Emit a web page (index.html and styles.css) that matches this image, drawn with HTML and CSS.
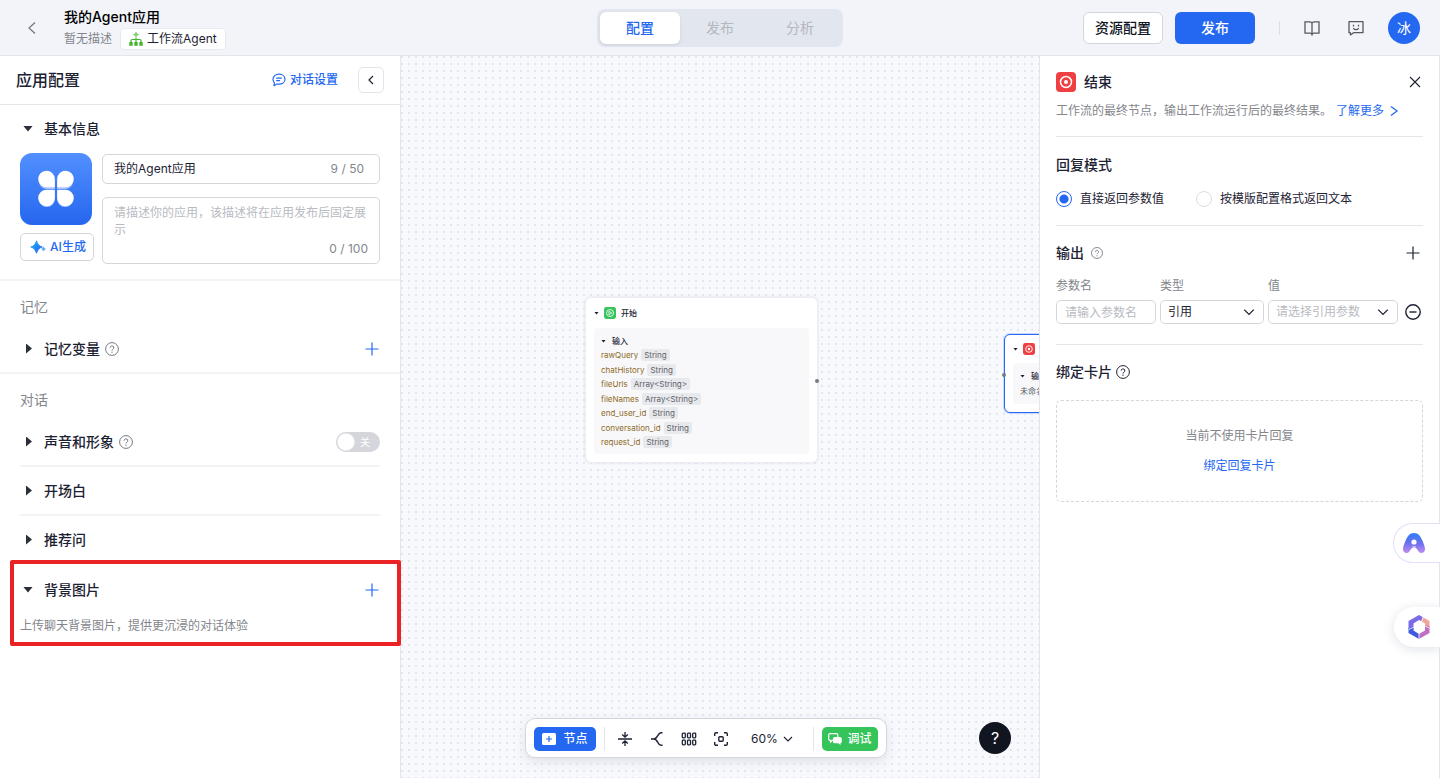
FILE: index.html
```html
<!DOCTYPE html>
<html lang="zh-CN">
<head>
<meta charset="utf-8">
<meta name="viewport" content="width=device-width, initial-scale=1">
<title>我的Agent应用</title>
<link rel="stylesheet" href="styles.css">
</head>
<body>
<svg class="defs" aria-hidden="true">
  <symbol id="help" viewBox="0 0 14 14"><circle cx="7" cy="7" r="6.4" fill="none" stroke="currentColor"/><path d="M5.2 5.7a1.8 1.8 0 1 1 2.7 1.5c-.6.4-.9.6-.9 1.3" fill="none" stroke="currentColor"/><circle cx="7" cy="10.2" r=".65" fill="currentColor"/></symbol>
  <symbol id="plus" viewBox="0 0 14 14"><path d="M7 .5v13M.5 7h13" fill="none" stroke="currentColor" stroke-width="1.2"/></symbol>
  <symbol id="down" viewBox="0 0 10 10"><path d="M1 3l4 4 4-4" fill="none" stroke="currentColor" stroke-width="1.1"/></symbol>
  <symbol id="end" viewBox="0 0 20 20"><rect width="20" height="20" rx="4" fill="#ee4043"/><circle cx="10" cy="10" r="5.5" fill="none" stroke="#fff" stroke-width="1.5"/><circle cx="10" cy="10" r="2" fill="#fff"/></symbol>
</svg>
<div class="app">
  <header class="topbar">
    <div class="topbar-left">
      <button class="icon-btn back" aria-label="返回"><svg width="10" height="14" viewBox="0 0 10 14"><path d="M8 1.500L2 7l6 5.500" fill="none" stroke="currentColor" stroke-width="1.3"/></svg></button>
      <div class="app-title">
        <h1>我的Agent应用</h1>
        <div class="app-meta">
          <span>暂无描述</span>
          <span class="badge"><svg width="14" height="14" viewBox="0 0 14 14"><path d="M7 0l.8 1.800L9.600 2.600l-1.800.800L7 5.200l-.8-1.800-1.800-.8 1.800-.8z" fill="#7ccf68" stroke="#7ccf68" stroke-width=".6"/><path d="M7 5.500v5M2 10.500V8.800q0-1.300 1.300-1.300h7.400q1.300 0 1.300 1.300v1.700" fill="none" stroke="#45b52e" stroke-width="1.200"/><path d="M.3 10h3.400v3.700H.3zM5.300 10h3.400v3.700H5.300zM10.300 10h3.400v3.700h-3.400z" fill="#45b52e"/></svg>工作流Agent</span>
        </div>
      </div>
    </div>
    <nav class="tabs">
      <button class="tab tab-active">配置</button>
      <button class="tab">发布</button>
      <button class="tab">分析</button>
    </nav>
    <div class="topbar-right">
      <button class="btn btn-outline">资源配置</button>
      <button class="btn btn-primary">发布</button>
      <span class="top-sep"></span>
      <button class="icon-btn" aria-label="文档"><svg width="16" height="16" viewBox="0 0 16 16"><path d="M8 3.200Q7.600 1.800 6 1.800H1v11.400h5q1.600 0 2 1.400.4-1.400 2-1.400h5V1.800h-5Q8.400 1.800 8 3.200zM8 3.200v11.400" fill="none" stroke="currentColor" stroke-width="1.300"/></svg></button>
      <button class="icon-btn" aria-label="反馈"><svg width="16" height="16" viewBox="0 0 16 16"><path d="M1 1.700h14v11H5.500L2.500 14.900l-.2-2.200H1z" fill="none" stroke="currentColor" stroke-width="1.300" stroke-linejoin="round"/><path d="M5.500 4.800v1.700M10.500 4.800v1.700M5.200 8.200q2.800 2.800 5.600 0" fill="none" stroke="currentColor" stroke-width="1.300"/></svg></button>
      <button class="avatar">冰</button>
    </div>
  </header>

  <main class="workspace">
    <aside class="config">
      <div class="config-head">
        <h2>应用配置</h2>
        <button class="link-btn"><svg width="14" height="14" viewBox="0 0 14 14"><path d="M7 1.200c3.500 0 6 2.200 6 5s-2.500 5-6 5c-.7 0-1.400 0-2-.2L2 12.700l.4-2.900C1.500 8.900 1 7.600 1 6.200c0-2.800 2.500-5 6-5z" fill="none" stroke="currentColor" stroke-width="1.200" stroke-linejoin="round"/><path d="M4.200 5.200h5.600M4.200 7.600h3.800" fill="none" stroke="currentColor" stroke-width="1.200"/></svg>对话设置</button>
        <button class="collapse" aria-label="收起"><svg width="8" height="10" viewBox="0 0 8 10"><path d="M6 1L2 5l4 4" fill="none" stroke="currentColor" stroke-width="1.200"/></svg></button>
      </div>

      <section class="block">
        <div class="row"><span class="caret caret-down"></span><h3>基本信息</h3></div>
        <div class="basic">
          <div class="basic-left">
            <svg class="app-icon" viewBox="0 0 72 72"><defs><linearGradient id="g1" x1="0" y1="0" x2="0" y2="1"><stop offset="0" stop-color="#5290ff"/><stop offset="1" stop-color="#2566ee"/></linearGradient></defs><rect width="72" height="72" rx="12" fill="url(#g1)"/><path fill="#a9c6ff" d="M34.800 36h-8a8 8 0 1 1 8-8.500zM37.200 36v-8.500a8 8 0 1 1 8 8.500zM34.800 38v8a8 8 0 1 1-8-8zM37.200 38h8a8 8 0 1 1-8 8z"/><path fill="#fff" d="M34.800 34.300h-8a8.300 8.300 0 1 1 8-8.500zM37.200 34.300v-8.500a8.300 8.300 0 1 1 8 8.500zM34.800 36.700v8a8.300 8.300 0 1 1-8-8zM37.200 36.700h8a8.300 8.300 0 1 1-8 8z"/></svg>
            <button class="ai-btn"><svg width="16" height="16" viewBox="0 0 16 16"><defs><linearGradient id="g2" x1="0" y1="0" x2="1" y2="1"><stop offset="0" stop-color="#1fb6f4"/><stop offset="1" stop-color="#1f5cf0"/></linearGradient></defs><path d="M6.500 2Q7.500 6.800 12 8 7.500 9.200 6.500 14 5.500 9.200 1 8 5.500 6.800 6.500 2z" fill="url(#g2)" stroke="url(#g2)" stroke-width="1.200" stroke-linejoin="round"/><path d="M13.500 7.800q.4 1.800 2.200 2.200-1.800.4-2.200 2.200-.4-1.800-2.200-2.200 1.800-.4 2.200-2.200z" fill="#59a2f8" stroke="#59a2f8" stroke-width=".4"/></svg>AI生成</button>
          </div>
          <div class="basic-right">
            <div class="field"><input type="text" aria-label="应用名称" value="我的Agent应用"><span>9 / 50</span></div>
            <div class="field field-area"><textarea aria-label="应用描述" rows="2" placeholder="请描述你的应用，该描述将在应用发布后固定展示"></textarea><span>0 / 100</span></div>
          </div>
        </div>
      </section>

      <section class="block">
        <h4>记忆</h4>
        <div class="row"><span class="caret"></span><h3>记忆变量</h3><svg class="help"><use href="#help"/></svg><button class="icon-btn add" aria-label="添加记忆变量"><svg width="14" height="14"><use href="#plus"/></svg></button></div>
      </section>

      <section class="block block-last">
        <h4>对话</h4>
        <div class="row row-line"><span class="caret"></span><h3>声音和形象</h3><svg class="help"><use href="#help"/></svg><label class="switch"><input type="checkbox" aria-label="声音和形象"><span>关</span></label></div>
        <div class="row row-line"><span class="caret"></span><h3>开场白</h3></div>
        <div class="row"><span class="caret"></span><h3>推荐问</h3></div>
      </section>

      <section class="bg-image">
        <div class="row"><span class="caret caret-down"></span><h3>背景图片</h3><button class="icon-btn add" aria-label="添加背景图片"><svg width="14" height="14"><use href="#plus"/></svg></button></div>
        <p>上传聊天背景图片，提供更沉浸的对话体验</p>
      </section>
    </aside>

    <section class="canvas">
      <article class="node node-start">
        <div class="node-head"><span class="mini-caret"></span><svg width="12" height="12" viewBox="0 0 20 20"><rect width="20" height="20" rx="4" fill="#35c459"/><circle cx="10" cy="10" r="5.800" fill="none" stroke="#fff" stroke-width="1.400"/><path d="M8.300 7l4.500 3-4.500 3z" fill="none" stroke="#fff" stroke-width="1.300"/></svg>开始</div>
        <div class="node-body">
          <div class="node-sub"><span class="mini-caret"></span>输入</div>
          <ul class="vars">
            <li>rawQuery<code>String</code></li>
            <li>chatHistory<code>String</code></li>
            <li>fileUrls<code>Array&lt;String&gt;</code></li>
            <li>fileNames<code>Array&lt;String&gt;</code></li>
            <li>end_user_id<code>String</code></li>
            <li>conversation_id<code>String</code></li>
            <li>request_id<code>String</code></li>
          </ul>
        </div>
        <span class="port port-out"></span>
      </article>
      <article class="node node-end">
        <div class="node-head"><span class="mini-caret"></span><svg width="12" height="12"><use href="#end"/></svg></div>
        <div class="node-body">
          <div class="node-sub"><span class="mini-caret"></span>输出</div>
          <p>未命名</p>
        </div>
        <span class="port port-in"></span>
      </article>

      <div class="toolbar">
        <button class="tool-btn tool-add"><svg width="14" height="12" viewBox="0 0 14 12"><rect width="14" height="12" rx="1.500" fill="#fff"/><path d="M7 3v6M4 6h6" stroke="#2468f2" stroke-width="1.200"/></svg>节点</button>
        <span class="tool-sep"></span>
        <div class="tool-icons">
          <button class="icon-btn" aria-label="收拢"><svg width="14" height="14" viewBox="0 0 14 14"><path d="M0 7h14M7 0v5M4.200 2.500L7 5.200l2.800-2.700M7 14V9M4.200 11.500L7 8.800l2.800 2.700" fill="none" stroke="currentColor" stroke-width="1.300"/></svg></button>
          <button class="icon-btn" aria-label="连线"><svg width="14" height="14" viewBox="0 0 14 14"><path d="M1 7h3M12.500.700H11C7.500.700 8 7 4 7c4 0 3.500 6.300 7 6.300h1.500" fill="none" stroke="currentColor" stroke-width="1.400"/></svg></button>
          <button class="icon-btn" aria-label="整理"><svg width="16" height="14" viewBox="0 0 16 14"><g fill="none" stroke="currentColor" stroke-width="1.300"><rect x="1.300" y="1.200" width="3" height="4.600" rx=".8"/><rect x="6.500" y="1.200" width="3" height="4.600" rx=".8"/><rect x="11.700" y="1.200" width="3" height="4.600" rx=".8"/><rect x="1.300" y="8.200" width="3" height="4.600" rx=".8"/><rect x="6.500" y="8.200" width="3" height="4.600" rx=".8"/><rect x="11.700" y="8.200" width="3" height="4.600" rx=".8"/></g></svg></button>
          <button class="icon-btn" aria-label="适应画布"><svg width="14" height="14" viewBox="0 0 14 14"><path d="M.7 4V2Q.7.700 2 .700h2M10 .700h2q1.300 0 1.300 1.300v2M13.300 10v2q0 1.300-1.300 1.300h-2M4 13.300H2Q.7 13.300.7 12v-2" fill="none" stroke="currentColor" stroke-width="1.400"/><rect x="4.800" y="4.800" width="4.400" height="4.400" rx="1" fill="none" stroke="currentColor" stroke-width="1.400"/></svg></button>
        </div>
        <button class="zoom">60%<svg width="10" height="10"><use href="#down"/></svg></button>
        <span class="tool-sep"></span>
        <button class="tool-btn tool-debug"><svg width="14" height="12" viewBox="0 0 14 12"><path d="M2 .7h6.500q1.300 0 1.300 1.300v4q0 1.300-1.300 1.300H4.200L2.500 9V7.300H2Q.7 7.300.7 6V2Q.7.700 2 .700z" fill="none" stroke="#fff" stroke-width="1.200"/><path d="M6.500 4H12q1.800 0 1.800 1.700v3q0 1.300-1.300 1.500V12l-2.200-1.700H6.500q-1.500 0-1.500-1.500V5.500Q5 4 6.500 4z" fill="#fff"/></svg>调试</button>
      </div>
      <button class="help-fab">?</button>
    </section>

    <aside class="detail">
      <div class="detail-block detail-intro">
        <div class="detail-title"><svg width="20" height="20"><use href="#end"/></svg><h2>结束</h2><button class="icon-btn close" aria-label="关闭"><svg width="12" height="12" viewBox="0 0 12 12"><path d="M1 1l10 10M11 1L1 11" fill="none" stroke="currentColor" stroke-width="1.100"/></svg></button></div>
        <p>工作流的最终节点，输出工作流运行后的最终结果。<a href="#more">了解更多<svg width="12" height="12" viewBox="0 0 12 12"><path d="M3 1.500L9 6l-6 4.500" fill="none" stroke="currentColor" stroke-width="1.300"/></svg></a></p>
      </div>
      <div class="detail-block detail-mode">
        <h3>回复模式</h3>
        <div class="radios">
          <label><input type="radio" name="mode" checked>直接返回参数值</label>
          <label><input type="radio" name="mode">按模版配置格式返回文本</label>
        </div>
      </div>
      <div class="detail-block detail-output">
        <div class="detail-title"><h3>输出</h3><svg class="help help-small"><use href="#help"/></svg><button class="icon-btn close close-add" aria-label="添加输出"><svg width="14" height="14"><use href="#plus"/></svg></button></div>
        <div class="params">
          <label for="p-name">参数名</label><label for="p-type">类型</label><label for="p-value">值</label><span></span>
          <input id="p-name" type="text" placeholder="请输入参数名">
          <div class="select"><select id="p-type"><option>引用</option></select><svg width="12" height="12"><use href="#down"/></svg></div>
          <div class="select select-empty"><select id="p-value"><option>请选择引用参数</option></select><svg width="12" height="12"><use href="#down"/></svg></div>
          <button class="icon-btn" aria-label="删除"><svg width="16" height="16" viewBox="0 0 16 16"><path d="M4.500 8h7" stroke="currentColor" stroke-width="1.400"/><circle cx="8" cy="8" r="7.200" fill="none" stroke="currentColor" stroke-width="1.400"/></svg></button>
        </div>
      </div>
      <div class="detail-card">
        <div class="detail-title card-title"><h3>绑定卡片</h3><svg class="help help-dark"><use href="#help"/></svg></div>
        <div class="empty-card"><p>当前不使用卡片回复</p><button class="link-btn">绑定回复卡片</button></div>
      </div>
    </aside>
  </main>

  <div class="floaters">
    <button class="floater floater-a" aria-label="智能助手"><svg width="22" height="22" viewBox="0 0 22 22"><defs><linearGradient id="g3" x1="0" y1="0" x2="0" y2="1"><stop offset="0" stop-color="#2d7df5"/><stop offset=".5" stop-color="#6a70ee"/><stop offset="1" stop-color="#c08cf2"/></linearGradient></defs><path d="M11 1c4.500 0 6.600 3.300 8.800 8.500 1.200 2.900 2.200 5.600 2.200 7.800 0 2.400-1.500 3.700-3.600 3.700-3.800 0-3.500-5.500-7.400-5.500S7.400 21 3.600 21C1.500 21 0 19.700 0 17.300c0-2.200 1-4.900 2.200-7.800C4.400 4.300 6.500 1 11 1z" fill="url(#g3)"/><circle cx="11" cy="10" r="2.600" fill="#fff"/><path d="M9.500 14h3v3h-3z" fill="#fff" opacity=".5"/></svg></button>
    <button class="floater" aria-label="工具"><svg width="24" height="24" viewBox="0 0 24 24"><path d="M12 0l4 2.300-1.500 3.900L12 5 6.500 8.500V14l-5 .5V6z" fill="#7d6ae8"/><path d="M16 2.300L22.500 6v7.500l-4.500-2V8.500l-3.500-2.300z" fill="#f0a59a"/><path d="M22.500 11v7L12 24v-5l6-3.500v-5z" fill="#c06fc4"/><path d="M1.500 13v5L12 24v-5l-5.500-3.500V12z" fill="#3f5be0"/><path d="M1.500 14.500l5.500-2.300M12 24v-5.500M16.300 2l-1.800 4.500M18 11l4.800 2.200" stroke="#fff" stroke-width=".8"/></svg></button>
  </div>
</div>
</body>
</html>
```
FILE: styles.css
```css
* { box-sizing: border-box; }

body {
  margin: 0;
  font-family: Inter, "Noto Sans CJK SC", sans-serif;
  font-size: 12px;
  line-height: 20px;
  color: #1d2233;
  background: #fff;
}

h1, h2, h3, h4, p, ul { margin: 0; padding: 0; }
h1, h2, h3, h4 { font-weight: 500; font-size: 14px; }
button, input, textarea, select { font: inherit; color: inherit; }
button { padding: 0; border: 0; background: none; cursor: pointer; }
svg { display: block; flex: none; }
a { color: #2468f2; text-decoration: none; }

.defs { position: absolute; width: 0; height: 0; }

.app { display: flex; flex-direction: column; min-height: 100vh; }

.icon-btn { display: grid; place-items: center; }

/* Top bar */
.topbar {
  display: grid;
  grid-template-columns: 1fr auto 1fr;
  align-items: center;
  height: 56px;
  padding: 0 20px;
  background: #f2f4fa;
  border-bottom: 1px solid #e3e5ea;
}
.topbar-left { display: flex; align-items: center; gap: 20px; }
.back { width: 24px; height: 24px; color: #777a83; }
.app-title h1 { color: #000; line-height: 22px; }
.app-meta { display: flex; align-items: center; gap: 8px; color: #84868c; }
.badge {
  display: flex;
  align-items: center;
  gap: 4px;
  height: 22px;
  padding: 0 8px;
  border: 1px solid #e8e9ee;
  border-radius: 4px;
  background: #fff;
  color: #1d2233;
}
.tabs { display: flex; padding: 3px; border-radius: 8px; background: #e2e6ef; }
.tab { width: 80px; height: 32px; border-radius: 6px; font-size: 14px; color: #b4b7c0; }
.tab-active { background: #fff; color: #2468f2; font-weight: 500; box-shadow: 0 1px 3px #c8cedb; }
.topbar-right { display: flex; align-items: center; justify-content: flex-end; }
.btn { width: 80px; height: 32px; border-radius: 6px; font-size: 14px; font-weight: 500; }
.btn-outline { border: 1px solid #d4d6dc; background: #fff; color: #11151f; }
.btn-primary { margin-left: 12px; background: #2468f2; color: #fff; }
.top-sep { width: 1px; height: 14px; margin: 0 24px; background: #dcdee5; }
.topbar-right .icon-btn { margin-right: 28px; color: #555962; }
.topbar-right .icon-btn + .icon-btn { margin-right: 24px; }
.avatar { width: 32px; height: 32px; border-radius: 50%; background: #2468f2; color: #fff; font-size: 14px; }

/* Workspace */
.workspace {
  flex: 1;
  display: grid;
  grid-template-columns: 401px minmax(0, 1fr) 401px;
}

/* Left configuration panel */
.config { border-right: 1px solid #e3e5ea; background: #fff; }
.config-head {
  display: flex;
  align-items: center;
  height: 49px;
  padding: 0 16px;
  border-bottom: 1px solid #e3e5ea;
}
.config-head h2 { flex: 1; font-size: 16px; }
.config-head .link-btn { font-weight: 500; }
.link-btn { display: flex; align-items: center; gap: 4px; color: #2468f2; }
.collapse {
  display: grid;
  place-items: center;
  width: 26px;
  height: 26px;
  margin-left: 20px;
  border: 1px solid #e3e5ea;
  border-radius: 5px;
}
.block { padding: 0 20px; border-bottom: 2px solid #f2f3f5; }
.block-last { border-bottom: 0; }
.block h4 { height: 44px; padding-top: 8px; line-height: 36px; font-weight: 400; color: #84868c; }
.row { display: flex; align-items: center; height: 47px; }
.row-line { height: 49px; border-bottom: 2px solid #f2f3f5; }
.row h3 { line-height: 20px; }
.caret {
  width: 6px;
  height: 10px;
  margin: 0 12px 0 6px;
  background: #2b2f3a;
  clip-path: polygon(0 0, 100% 50%, 0 100%);
}
.caret-down {
  width: 10px;
  height: 6px;
  margin: 0 11px 0 3px;
  clip-path: polygon(0 0, 100% 0, 50% 100%);
}
.help { width: 14px; height: 14px; margin-left: 5px; color: #777a83; }
.help-small { width: 12px; height: 12px; margin-left: 7px; }
.help-dark { margin-left: 4px; color: #1d2233; }
.add { width: 16px; height: 16px; margin-left: auto; color: #2468f2; }

.basic { display: flex; gap: 8px; padding: 1px 0 15px; }
.basic-left { display: flex; flex-direction: column; align-items: flex-start; gap: 8px; width: 74px; }
.app-icon { width: 72px; height: 72px; }
.ai-btn {
  display: flex;
  align-items: center;
  justify-content: center;
  gap: 4px;
  width: 74px;
  height: 28px;
  padding-left: 2px;
  border: 1px solid #d4d6dc;
  border-radius: 5px;
  color: #2468f2;
  font-weight: 500;
}
.basic-right { flex: 1; display: flex; flex-direction: column; gap: 13px; padding-top: 1px; }
.field {
  display: flex;
  align-items: center;
  height: 30px;
  padding: 0 11px;
  border: 1px solid #d4d6dc;
  border-radius: 5px;
}
.field input { flex: 1; min-width: 0; padding: 0; border: 0; outline: 0; background: none; }
.field span { padding-right: 4px; color: #84868c; }
.field-area { flex-direction: column; align-items: stretch; height: 67px; padding: 6px 11px 4px; }
.field-area textarea {
  flex: 1;
  padding: 0;
  border: 0;
  outline: 0;
  background: none;
  resize: none;
  overflow: hidden;
  line-height: 17px;
}
.field-area span { align-self: flex-end; padding: 0; }
::placeholder { color: #b8bbc2; opacity: 1; }

.switch { position: relative; margin-left: auto; }
.switch input {
  display: block;
  appearance: none;
  width: 44px;
  height: 20px;
  margin: 0;
  border-radius: 10px;
  background: radial-gradient(circle at 10px 10px, #fff 8px, transparent 9px) #d4d6dc;
}
.switch span { position: absolute; top: 0; right: 10px; font-size: 10px; color: #fff; }

.bg-image { position: relative; padding: 3px 20px 10px; }
.bg-image p { padding-top: 3px; color: #84868c; }
.bg-image::after {
  content: "";
  position: absolute;
  inset: -3px -1px 0 10px;
  border: 4px solid #ea2224;
  border-radius: 2px;
  pointer-events: none;
  z-index: 2;
}

/* Flow canvas */
.canvas {
  position: relative;
  overflow: hidden;
  background: radial-gradient(circle at 1px 1px, #dfe1e9 0, #e6e8ef 1px, transparent 1px) 0 0 / 7px 7px #f8f9fd;
}
.node {
  position: absolute;
  padding: 7px 8px 8px;
  border: 1px solid #eceef4;
  border-radius: 6px;
  background: #fff;
  font-size: 8px;
  line-height: 12px;
  box-shadow: 0 0 3px #dfe1e8;
}
.node-start { left: 184px; top: 241px; width: 233px; }
.node-end { left: 603px; top: 278px; width: 233px; border-color: #2468f2; box-shadow: 0 0 0 1px #c9d9fb; }
.node-head { display: flex; align-items: center; gap: 5px; height: 16px; font-weight: 500; }
.mini-caret { width: 5px; height: 3px; background: #1d2233; clip-path: polygon(0 0, 100% 0, 50% 100%); }
.node-body { margin-top: 7px; padding: 7px 7px 6px; border-radius: 4px; background: #f8f8fa; }
.node-end .node-head { height: 14px; }
.node-end .node-body { padding-bottom: 7px; }
.node-sub { display: flex; align-items: center; gap: 6px; font-weight: 500; }
.node-body p { padding-top: 3px; color: #555962; }
.vars {
  display: flex;
  flex-direction: column;
  justify-content: space-between;
  min-height: 101px;
  padding-top: 2px;
  list-style: none;
  color: #8d6a1f;
}
.vars li { display: flex; align-items: center; gap: 3px; }
.vars code { padding: 0 3px; border-radius: 2px; background: #e8e9ec; color: #60636b; font: inherit; }
.port { position: absolute; width: 4px; height: 4px; border-radius: 50%; background: #777a83; }
.port-out { right: -2px; top: 81px; }
.port-in { left: -3px; top: 38px; }

.toolbar {
  position: absolute;
  left: 124px;
  bottom: 20px;
  display: flex;
  align-items: center;
  height: 40px;
  padding: 2px 8px 0;
  border: 1px solid #d4d6dc;
  border-radius: 10px;
  background: #fff;
  box-shadow: 0 4px 12px #e0e2ea;
}
.tool-btn {
  display: flex;
  align-items: center;
  justify-content: center;
  gap: 7px;
  width: 62px;
  height: 24px;
  border-radius: 5px;
  color: #fff;
  font-weight: 500;
}
.tool-add { background: #2468f2; }
.tool-debug { gap: 5px; width: 56px; background: #35c459; }
.tool-sep { width: 1px; height: 24px; margin: 0 8px; background: #e3e5ea; }
.tool-icons { display: flex; gap: 16px; padding: 0 18px 0 4px; }
.tool-icons .icon-btn { width: 16px; height: 16px; }
.zoom { display: flex; align-items: center; gap: 5px; width: 58px; padding-left: 4px; }
.help-fab {
  position: absolute;
  right: 28px;
  bottom: 24px;
  width: 32px;
  height: 32px;
  border-radius: 50%;
  background: #11151f;
  color: #fff;
  font-size: 16px;
}

/* Node detail panel */
.detail { padding: 0 16px; border: solid #e3e5ea; border-width: 0 1px; background: #fff; }
.detail-block { border-bottom: 1px solid #e3e5ea; }
.detail-intro { padding: 16px 0 15px; }
.detail-title { display: flex; align-items: center; }
.detail-title h2 { margin-left: 8px; }
.close { width: 16px; height: 16px; margin-left: auto; }
.close-add { margin-right: 2px; }
.detail-intro p { display: flex; align-items: center; padding-top: 9px; color: #84868c; }
.detail-intro a { display: flex; align-items: center; gap: 4px; margin-left: 4px; }
.detail-mode { padding: 18px 0 16px; }
.radios { display: flex; gap: 32px; padding-top: 14px; }
.radios label { display: flex; align-items: center; gap: 8px; }
.radios input {
  appearance: none;
  width: 16px;
  height: 16px;
  margin: 0;
  border: 1px solid #dcdee5;
  border-radius: 50%;
}
.radios input:checked { border-color: #2468f2; background: radial-gradient(circle, #2468f2 4px, transparent 5px); }
.detail-output { padding: 17px 0 20px; }
.params {
  display: grid;
  grid-template-columns: 100fr 104fr 130fr 21px;
  column-gap: 4px;
  row-gap: 4px;
  align-items: center;
  padding-top: 13px;
}
.params label { color: #84868c; }
.params > input, .select select {
  width: 100%;
  height: 24px;
  padding: 0 8px;
  border: 1px solid #d4d6dc;
  border-radius: 5px;
  background: #fff;
  outline: 0;
  appearance: none;
}
.select { position: relative; }
.select select { display: block; padding: 0 24px 0 7px; }
.select-empty select { color: #b8bbc2; }
.select svg { position: absolute; right: 9px; top: 6px; pointer-events: none; }
.detail-card { padding-top: 17px; }
.empty-card {
  display: flex;
  flex-direction: column;
  align-items: center;
  gap: 10px;
  margin-top: 18px;
  padding: 25px 0;
  border: 1px dashed #d4d6dc;
  border-radius: 5px;
  color: #84868c;
}

/* Edge shortcuts */
.floaters {
  position: fixed;
  right: 0;
  bottom: 131px;
  display: flex;
  flex-direction: column;
  align-items: flex-end;
  gap: 44px;
}
.floater {
  display: grid;
  place-items: center start;
  width: 46px;
  height: 40px;
  padding-left: 13px;
  border-radius: 20px 0 0 20px;
  background: #fff;
  box-shadow: 0 2px 12px #dfe1e8;
}
.floater-a { width: 47px; padding-left: 9px; border: 1px solid #dfe1fa; border-right: 0; box-shadow: none; }
```
